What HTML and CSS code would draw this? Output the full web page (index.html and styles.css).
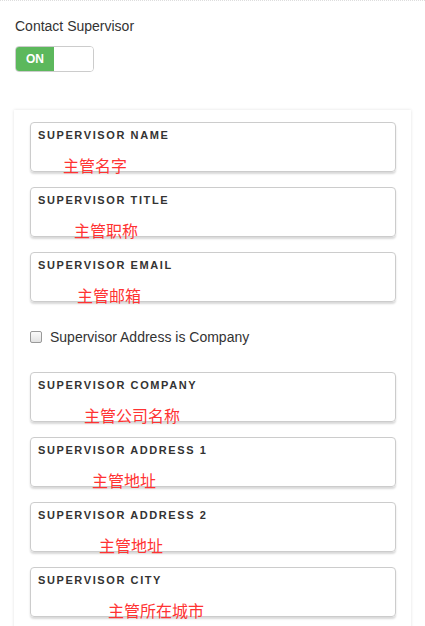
FILE: index.html
```html
<!DOCTYPE html>
<html lang="en">
<head>
  <meta charset="UTF-8">
  <meta name="viewport" content="width=device-width, initial-scale=1">
  <title>Contact Supervisor</title>
  <link rel="stylesheet" href="styles.css">
</head>
<body>
  <div class="page">
    <div class="head">
      <p class="title">Contact Supervisor</p>
      <div class="switch">
        <span class="switch-on">ON</span>
        <span class="switch-off"></span>
      </div>
    </div>

    <div class="panel">
      <div class="field">
        <div class="label">SUPERVISOR NAME</div>
        <div class="note n1">主管名字</div>
      </div>
      <div class="field">
        <div class="label">SUPERVISOR TITLE</div>
        <div class="note n2">主管职称</div>
      </div>
      <div class="field">
        <div class="label">SUPERVISOR EMAIL</div>
        <div class="note n3">主管邮箱</div>
      </div>

      <label class="check">
        <span class="box"></span>
        Supervisor Address is Company
      </label>

      <div class="field">
        <div class="label">SUPERVISOR COMPANY</div>
        <div class="note n4">主管公司名称</div>
      </div>
      <div class="field">
        <div class="label">SUPERVISOR ADDRESS 1</div>
        <div class="note n5">主管地址</div>
      </div>
      <div class="field">
        <div class="label">SUPERVISOR ADDRESS 2</div>
        <div class="note n6">主管地址</div>
      </div>
      <div class="field">
        <div class="label">SUPERVISOR CITY</div>
        <div class="note n7">主管所在城市</div>
      </div>
    </div>
  </div>
</body>
</html>
```

FILE: styles.css
```css
body {
  margin: 0;
  font-family: "Liberation Sans", Arial, sans-serif;
  color: #333;
  background: #fff;
}
.page {
  border-top: 1px dotted #ddd;
  height: 625px;
  overflow: hidden;
}
.head {
  padding: 15px 15px 0;
}
.title {
  margin: 0;
  font-size: 14px;
  line-height: 20px;
}
.switch {
  display: flex;
  width: 77px;
  height: 24px;
  margin-top: 10px;
  border: 1px solid #ccc;
  border-radius: 4px;
  overflow: hidden;
}
.switch-on {
  width: 38px;
  background: #5cb85c;
  color: #fff;
  font-size: 12px;
  font-weight: bold;
  line-height: 24px;
  text-align: center;
}
.switch-off {
  flex: 1;
  background: #fff;
}
.panel {
  margin: 38px 14px 0 14px;
  padding: 12px 15px 0 16px;
  box-shadow: 0 0 3px rgba(0,0,0,0.12);
  min-height: 600px;
}
.field {
  box-sizing: border-box;
  height: 50px;
  margin-bottom: 15px;
  padding: 6px 7px 0;
  border: 1px solid #ccc;
  border-radius: 4px;
  box-shadow: 0 2px 2px rgba(0,0,0,0.15);
}
.label {
  font-size: 11px;
  font-weight: bold;
  letter-spacing: 1.6px;
  line-height: 13px;
  color: #333;
}
.note {
  margin-top: 15px;
  font-family: "Noto Sans CJK SC", sans-serif;
  font-size: 16px;
  line-height: 16px;
  color: #ff3333;
}
.n1 { padding-left: 25px; }
.n2 { padding-left: 36px; }
.n3 { padding-left: 39px; }
.n4 { padding-left: 46px; }
.n5 { padding-left: 54px; }
.n6 { padding-left: 61px; }
.n7 { padding-left: 70px; }
.check {
  display: flex;
  align-items: center;
  gap: 8px;
  height: 20px;
  margin: 25px 0;
  font-size: 14px;
  color: #333;
}
.box {
  box-sizing: border-box;
  width: 12px;
  height: 12px;
  border: 1px solid #999;
  border-radius: 2px;
  background: linear-gradient(#fafafa, #e2e2e2);
}
```
